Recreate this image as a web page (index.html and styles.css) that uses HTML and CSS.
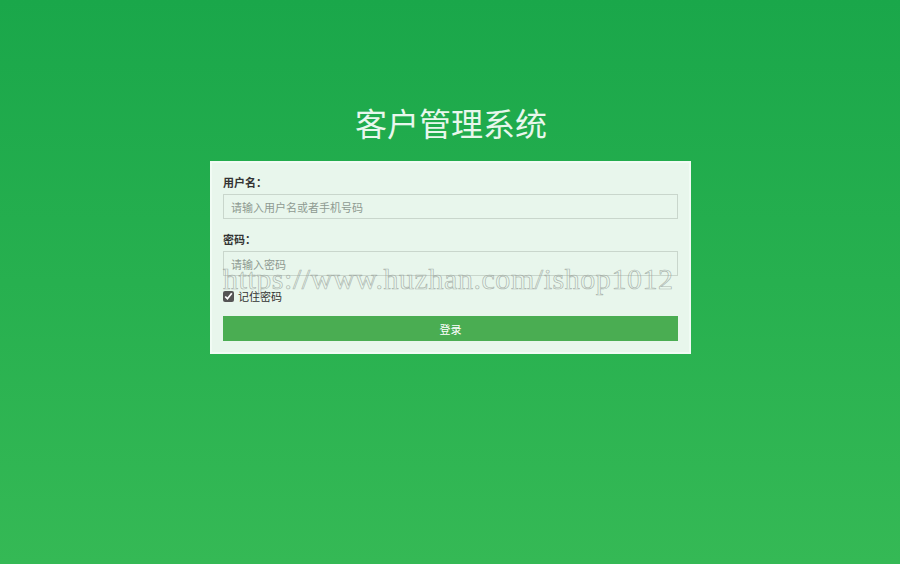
FILE: index.html
```
<!DOCTYPE html>
<html lang="zh-CN">
<head>
<meta charset="utf-8">
<title>客户管理系统</title>
<link rel="stylesheet" href="styles.css">
</head>
<body>
<div class="page">
  <h1 class="title">客户管理系统</h1>
  <form class="card">
    <label class="label" for="u">用户名：</label>
    <input class="input" id="u" type="text" placeholder="请输入用户名或者手机号码">
    <label class="label label-2" for="p">密码：</label>
    <input class="input" id="p" type="password" placeholder="请输入密码">
    <div class="remember"><input type="checkbox" class="check" checked><span>记住密码</span></div>
    <button type="button" class="btn">登录</button>
    <div class="watermark">https://www.huzhan.com/ishop1012</div>
  </form>
</div>
</body>
</html>
```
FILE: styles.css
```
html, body {
  margin: 0;
  height: 100%;
}
body {
  background: linear-gradient(to bottom, #1aa74a 0%, #27b04f 50%, #35b955 100%);
  font-family: "Noto Sans CJK SC", "Liberation Sans", sans-serif;
  color: #333;
}
.page {
  display: flex;
  flex-direction: column;
  align-items: center;
  padding-top: 102px;
}
.title {
  margin: 0 0 19px 0;
  font-size: 32px;
  line-height: 40px;
  font-weight: normal;
  color: #e8f7ec;
  padding-left: 2px;
}
.card {
  position: relative;
  box-sizing: border-box;
  width: 481px;
  margin: 0;
  margin-left: 1px;
  padding: 9px 11px 11px 11px;
  background: #e8f6ec;
  border: 2px solid #f1fbf4;
  display: flex;
  flex-direction: column;
}
.label {
  font-size: 11px;
  line-height: 20px;
  font-weight: bold;
  color: #333;
}
.label-2 {
  margin-top: 10px;
}
.input {
  margin-top: 2px;
  box-sizing: border-box;
  height: 25px;
  width: 455px;
  padding: 0 7px;
  border: 1px solid #c9d6cc;
  background: #e8f6ec;
  font-family: "Noto Sans CJK SC", "Liberation Sans", sans-serif;
  font-size: 11px;
  color: #333;
  outline: none;
}
.input::placeholder {
  color: #8e9a91;
}
.remember {
  margin-top: 12px;
  height: 16px;
  display: flex;
  align-items: center;
  font-size: 11px;
  color: #333;
}
.check {
  margin: 0 4px 0 0;
  width: 11px;
  height: 11px;
  accent-color: #555;
}
.btn {
  margin-top: 12px;
  height: 25px;
  width: 455px;
  border: none;
  background: #4aad52;
  color: #fff;
  font-family: "Noto Sans CJK SC", "Liberation Sans", sans-serif;
  font-size: 11px;
  padding: 0;
}
.watermark {
  position: absolute;
  left: 11px;
  top: 99px;
  font-family: "Liberation Serif", serif;
  font-size: 30px;
  letter-spacing: 0.55px;
  line-height: 34px;
  color: transparent;
  -webkit-text-stroke: 0.7px rgba(150, 158, 152, 0.75);
  white-space: nowrap;
  pointer-events: none;
}
```
